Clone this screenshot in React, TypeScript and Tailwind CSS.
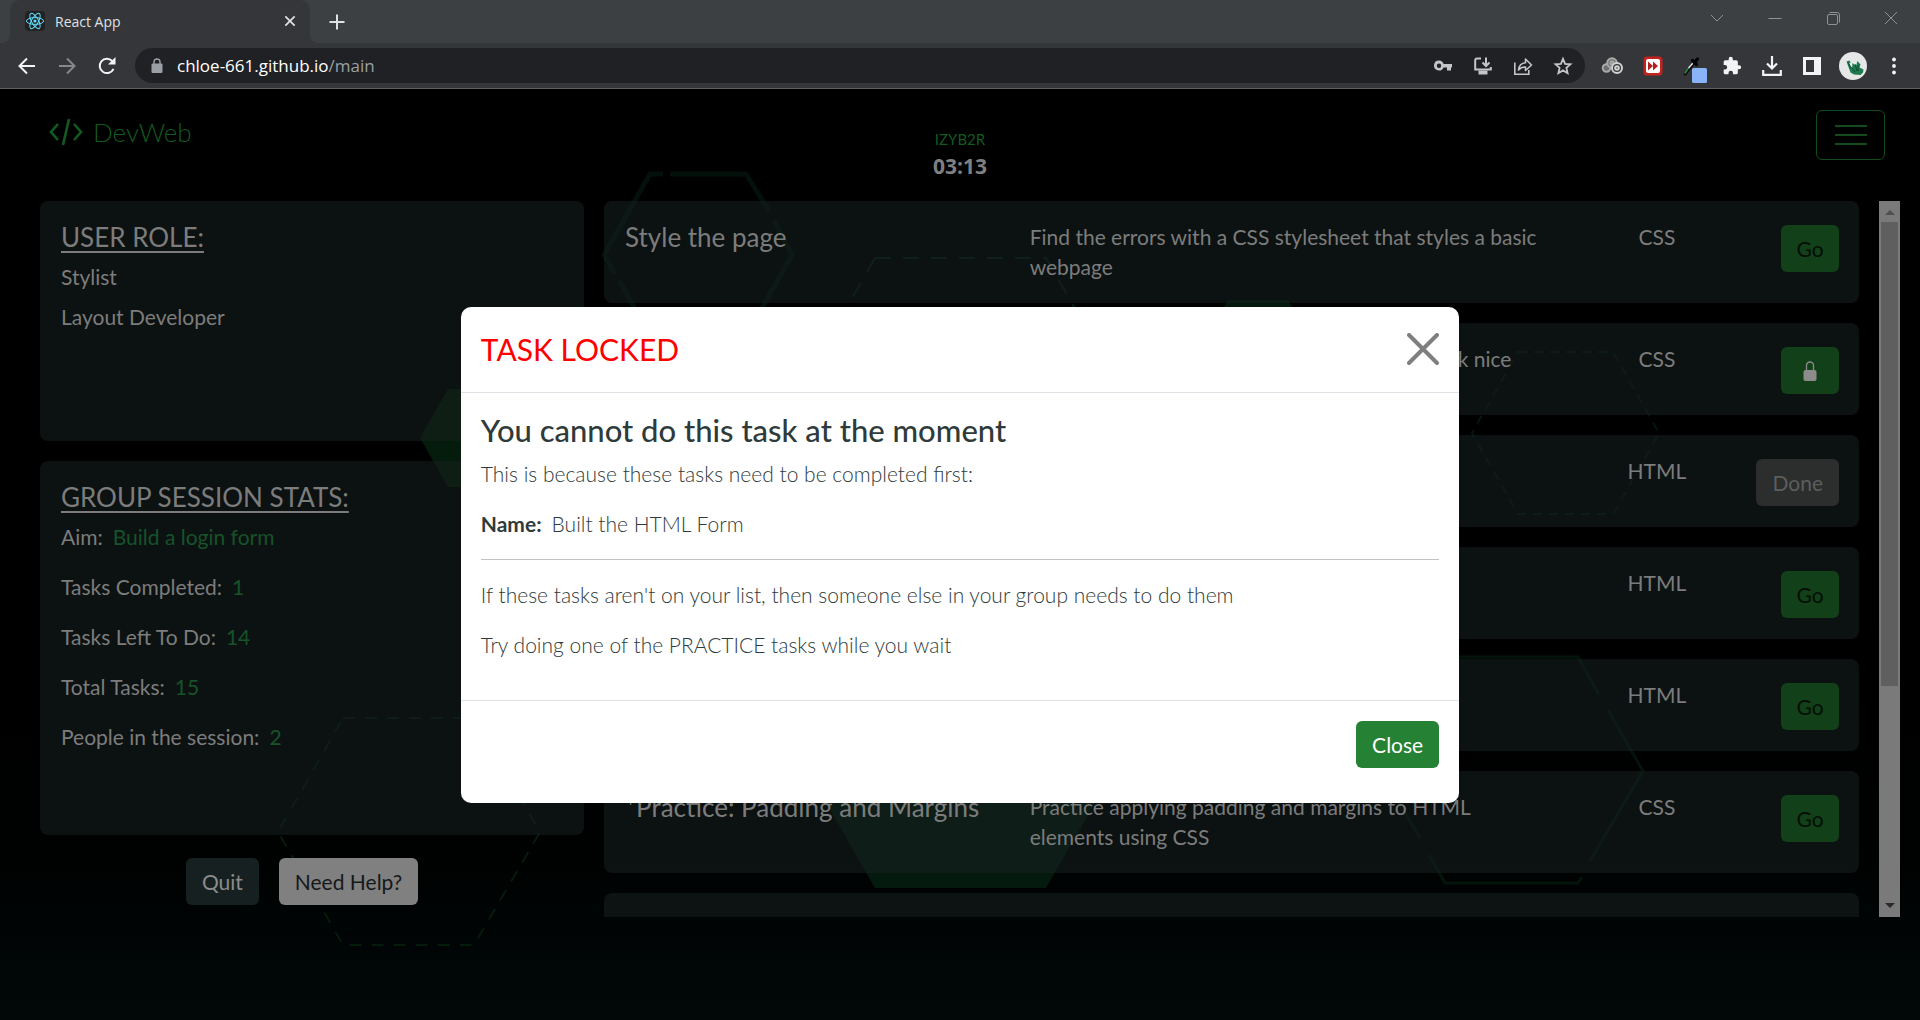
import React from "react";
import type { ReactNode } from "react";

type IconProps = { className?: string; children: ReactNode; box?: string };

function Icon({ className = "size-6", children, box = "0 0 24 24" }: IconProps) {
  return (
    <svg className={className} viewBox={box} fill="none" stroke="currentColor" strokeWidth="2" aria-hidden="true">
      {children}
    </svg>
  );
}

function ReactLogo() {
  return (
    <svg className="size-5 rounded-sm bg-[#222222]" viewBox="-10 -10 20 20" fill="none" stroke="#61dafb" strokeWidth="1" aria-hidden="true">
      <circle r="1.6" fill="#61dafb" stroke="none" />
      <ellipse rx="8.6" ry="3.4" />
      <ellipse rx="8.6" ry="3.4" transform="rotate(60)" />
      <ellipse rx="8.6" ry="3.4" transform="rotate(120)" />
    </svg>
  );
}

function TabStrip() {
  return (
    <div className="flex h-[43px] items-stretch bg-[#3c4043]">
      <div className="flex w-[10px] bg-[#35363a]">
        <span className="flex-1 rounded-br-lg bg-[#3c4043]" />
      </div>
      <div className="flex w-[300px] items-center rounded-t-[10px] bg-[#35363a] pl-[15px] pr-[12px] pb-px">
        <ReactLogo />
        <span className="ml-[10px] flex-1 text-[14px] text-[#dfe1e5]">React App</span>
        <button aria-label="Close tab" className="text-[#dfe1e5]">
          <Icon className="size-4">
            <path d="M5 5l14 14M19 5L5 19" strokeWidth="2.6" />
          </Icon>
        </button>
      </div>
      <div className="flex w-[10px] bg-[#35363a]">
        <span className="flex-1 rounded-bl-lg bg-[#3c4043]" />
      </div>
      <button aria-label="New tab" className="ml-[9px] text-[#dfe1e5]">
        <Icon className="size-4" box="0 0 16 16">
          <path d="M8 .5v15M.5 8h15" />
        </Icon>
      </button>
      <div className="ml-auto flex items-center gap-[42px] pb-[7px] pr-[21px] text-[#8f9294]">
        <button aria-label="Search tabs">
          <Icon className="size-4" box="0 0 16 16"><path d="M2 5l6 6 6-6" strokeWidth="1" /></Icon>
        </button>
        <button aria-label="Minimize">
          <Icon className="size-4" box="0 0 16 16"><path d="M1.500 8.500h13" strokeWidth="1" /></Icon>
        </button>
        <button aria-label="Restore">
          <Icon className="size-4" box="0 0 16 16">
            <rect x="2.500" y="4.500" width="10" height="10" rx="1.500" strokeWidth="1" />
            <path d="M4.500 2.500h7.500a2.500 2.500 0 0 1 2.500 2.500v7.500" strokeWidth="1" />
          </Icon>
        </button>
        <button aria-label="Close window">
          <Icon className="size-4" box="0 0 16 16"><path d="M2 2l12 12M14 2L2 14" strokeWidth="1" /></Icon>
        </button>
      </div>
    </div>
  );
}

function Toolbar() {
  return (
    <div className="flex h-[46px] items-center border-b border-[#5f6063] bg-[#35363a] pl-[17px] pr-4 text-[#f1f3f4]">
      <div className="flex gap-5">
        <button aria-label="Back">
          <Icon className="size-5" box="0 0 20 20"><path d="M18 10H3M10 2.500L2.500 10l7.500 7.500" /></Icon>
        </button>
        <button aria-label="Forward" className="text-[#85878a]">
          <Icon className="size-5" box="0 0 20 20"><path d="M2 10h15M10 2.500l7.500 7.500-7.500 7.500" /></Icon>
        </button>
        <button aria-label="Reload">
          <Icon className="size-5" box="0 0 20 20">
            <path d="M16.500 12.800A7.200 7.200 0 1 1 15.200 5" />
            <path d="M18.500 1v7.500H11z" fill="currentColor" stroke="none" />
          </Icon>
        </button>
      </div>
      <div className="ml-[18px] flex h-[35px] flex-1 items-center rounded-full bg-[#202124] pl-4 pr-[12px]">
        <svg className="h-4 w-3 text-[#9aa0a6]" viewBox="0 0 12 16" fill="currentColor" aria-hidden="true">
          <rect x="0.500" y="5.500" width="11" height="9.500" rx="1.200" />
          <path d="M3 6V4a3 3 0 0 1 6 0v2" fill="none" stroke="currentColor" strokeWidth="1.400" />
        </svg>
        <a href="#main" className="ml-[14px] flex-1 text-[17px] text-white">
          chloe-661.github.io<span className="text-[#9aa0a6]">/main</span>
        </a>
        <div className="flex items-center gap-5 text-[#c4c5c6]">
          <button aria-label="Passwords">
            <svg className="size-5" viewBox="0 0 20 20" fill="currentColor" aria-hidden="true">
              <path fillRule="evenodd" d="M6 4.500a5 5 0 1 0 4.600 7h3.400v3h4v-3h1v-3.500h-8.400A5 5 0 0 0 6 4.500zM6 7.500a2.200 2.200 0 1 1 0 4.400 2.200 2.200 0 0 1 0-4.400z" />
            </svg>
          </button>
          <button aria-label="Install app">
            <Icon className="size-5" box="0 0 20 20">
              <path d="M8 2.500H4A1.800 1.800 0 0 0 2.200 4v9.500h15.600V11" />
              <path d="M13 1.500v8M9.500 6.500L13 10l3.500-3.500" />
              <path d="M5.500 14.500h9v4h-9z" fill="currentColor" stroke="none" />
            </Icon>
          </button>
          <button aria-label="Share">
            <Icon className="size-5" box="0 0 20 20">
              <path d="M1.800 6.500v11.700h14V14" strokeWidth="1.600" />
              <path d="M5.500 14c.500-4.500 3-7 7-7.300V3l6 6-6 5.500V11c-3-.200-5 .700-7 3z" strokeWidth="1.600" strokeLinejoin="round" />
            </Icon>
          </button>
          <button aria-label="Bookmark this page">
            <Icon className="size-5" box="0 0 20 20">
              <path d="M10 2.800l2.100 5 5.400.500-4.100 3.600 1.200 5.300L10 14.400l-4.600 2.800 1.200-5.300L2.500 8.300l5.400-.500z" strokeWidth="1.800" />
            </Icon>
          </button>
        </div>
      </div>
      <div className="ml-4 flex items-center gap-5">
        <button aria-label="Cloud extension" className="text-[#a9a9a9]">
          <Icon className="size-[22px]" box="0 0 22 22">
            <circle cx="5.500" cy="13" r="3.800" fill="#6f7072" />
            <circle cx="11" cy="8" r="4.800" fill="#77787a" />
            <circle cx="11" cy="8" r="1.500" />
            <circle cx="16" cy="13" r="5" fill="#35363a" stroke="#d2d2d2" />
            <circle cx="16" cy="13" r="1.800" stroke="#d2d2d2" />
          </Icon>
        </button>
        <button aria-label="Speed extension">
          <svg className="size-5" viewBox="0 0 20 20" aria-hidden="true">
            <rect x="0.500" y="0.500" width="19" height="19" rx="3.500" fill="#c5221f" />
            <rect x="3" y="3" width="14" height="14" rx="2" fill="#fff" />
            <path d="M5 5.500l5 4.500-5 4.500zM10 5.500l5 4.500-5 4.500z" fill="#b3201d" />
          </svg>
        </button>
        <button aria-label="Colour picker" className="flex">
          <svg className="h-[36px] w-6" viewBox="0 0 24 36" aria-hidden="true">
            <path d="M2 26L10 16" stroke="#0a0a0a" strokeWidth="3" strokeLinecap="round" />
            <path d="M2 25L6 19.500" stroke="#2c8a48" strokeWidth="1.500" strokeLinecap="round" />
            <path d="M6 19.500L10 15" stroke="#dfe1e5" strokeWidth="1.500" strokeLinecap="round" />
            <path d="M9.500 12.500l4 4M12 14L14.500 11" stroke="#050505" strokeWidth="3.500" strokeLinecap="round" />
            <rect x="9" y="20" width="15" height="15" rx="1.500" fill="#8ab4f8" />
          </svg>
        </button>
        <button aria-label="Extensions" className="-ml-[5px]">
          <svg className="size-5" viewBox="0 0 24 24" fill="currentColor" aria-hidden="true">
            <path d="M20.500 11H19V7a2 2 0 0 0-2-2h-4V3.500a2.500 2.500 0 0 0-5 0V5H4a2 2 0 0 0-2 2v3.800h1.500a2.700 2.700 0 0 1 0 5.400H2V20a2 2 0 0 0 2 2h3.800v-1.500a2.700 2.700 0 0 1 5.400 0V22H17a2 2 0 0 0 2-2v-4h1.500a2.500 2.500 0 0 0 0-5z" />
          </svg>
        </button>
        <button aria-label="Downloads">
          <Icon className="size-5" box="0 0 20 20">
            <path d="M10 0v12M5 7.500l5 5 5-5" strokeWidth="2.200" />
            <path d="M1.200 14v4.800h17.600V14" strokeWidth="2.200" />
          </Icon>
        </button>
        <button aria-label="Side panel">
          <svg className="size-5" viewBox="0 0 20 20" aria-hidden="true">
            <path fill="currentColor" fillRule="evenodd" d="M1 1h18v18H1zM4 4v12h8V4z" />
          </svg>
        </button>
        <button aria-label="Profile" className="-ml-[3px]">
          <svg className="size-7" viewBox="0 0 28 28" aria-hidden="true">
            <circle cx="14" cy="14" r="14" fill="#e6e8e8" />
            <path d="M7.500 9.500l3-1 1.200 2-1.700.500 3 5.500.500-5.500 3.500 3 1.500-5 3 3.500-1 3 4 2-.500 3-2.500 2.500-6.500-.500-3.500-2z" fill="#1f7a4e" />
            <path d="M16 12l2 7M19 13v6M12 15l4 5M9.500 11l2 4.500" stroke="#0d4a33" strokeWidth="1" />
          </svg>
        </button>
        <button aria-label="Chrome menu" className="-ml-[3px]">
          <svg className="size-5" viewBox="0 0 20 20" fill="currentColor" aria-hidden="true">
            <circle cx="10" cy="3.500" r="1.900" />
            <circle cx="10" cy="10" r="1.900" />
            <circle cx="10" cy="16.500" r="1.900" />
          </svg>
        </button>
      </div>
    </div>
  );
}

/* Decorative hexagons behind the cards. */
function Backdrop() {
  return (
    <svg className="absolute inset-0 size-full" viewBox="0 89 1920 931" preserveAspectRatio="none" fill="none" aria-hidden="true">
      <path d="M663 174H650L604 255l11 19M619 280l31 56h96l46-81-18-35M769 211l-23-37h-76" stroke="#03110a" strokeWidth="5" />
      <path d="M875 258h171l85 148-85 148H875l-85-148z" stroke="#06200f" strokeWidth="2" strokeDasharray="16 12" />
      <path d="M1228 300h60l60 100h-180z" fill="#04190b" />
      <path d="M420 438l28-49h60v98h-60z" fill="#051b0b" />
      <path d="M343 718h131l66 114-66 113H343l-65-113z" stroke="#051c0d" strokeWidth="2" strokeDasharray="12 10" />
      <path d="M1518 352h95l46 81-46 81h-95l-46-81z" stroke="#05170d" strokeWidth="2" strokeDasharray="9 7" />
      <path d="M1440 657h138l21 38M1608 710l35 61-53 90M1582 877l-4 6h-133l-16-28M1420 838l-40-67" stroke="#04140b" strokeWidth="3" />
      <path d="M875 888l-85-148h341l-85 148z" fill="#051a0e" />
    </svg>
  );
}

const roundButton = "h-[47px] rounded-md px-4 text-[21px]";
const panel = "rounded-lg bg-[#15201f]/55";

type Task = {
  title: string;
  description: string;
  type: string;
  status: "go" | "locked" | "done" | "clipped";
};

const tasks: Task[] = [
  { title: "Style the page", description: "Find the errors with a CSS stylesheet that styles a basic webpage", type: "CSS", status: "go" },
  { title: "", description: "Style the login form using CSS to make this look nice", type: "CSS", status: "locked" },
  { title: "", description: "", type: "HTML", status: "done" },
  { title: "", description: "", type: "HTML", status: "go" },
  { title: "", description: "", type: "HTML", status: "go" },
  { title: "*Practice: Padding and Margins", description: "Practice applying padding and margins to HTML elements using CSS", type: "CSS", status: "go" },
  { title: "", description: "", type: "", status: "clipped" },
];

function TaskAction({ status }: { status: Task["status"] }) {
  if (status === "clipped") return null;
  if (status === "done") {
    return <button disabled className={`${roundButton} bg-[#2c2d2d] text-[#5c5e5e]`}>Done</button>;
  }
  if (status === "locked") {
    return (
      <button aria-label="Locked task" className={`${roundButton} flex w-[58px] items-center justify-center bg-[#124019] text-[#8c8c8c]`}>
        <svg className="h-5 w-[14px]" viewBox="0 0 14 20" aria-hidden="true">
          <rect x="0.500" y="9" width="13" height="11" rx="2" fill="currentColor" />
          <path d="M3.500 10V4.500a3.500 3.500 0 0 1 7 0V10" fill="none" stroke="currentColor" strokeWidth="1.300" />
        </svg>
      </button>
    );
  }
  return <button className={`${roundButton} w-[58px] !px-0 bg-[#124019] text-[#040d06]`}>Go</button>;
}

function TaskCard({ task }: { task: Task }) {
  return (
    <li className={`${panel} grid min-h-[92px] shrink-0 grid-cols-[minmax(0,20fr)_minmax(0,26fr)_minmax(0,10fr)_minmax(0,4fr)] pt-[21px] pr-5 pb-[21px] pl-[21px] leading-[30px]`}>
      <h2 className="text-[26px] whitespace-nowrap">{task.title}</h2>
      <p className="pr-4 text-[21px]">{task.description}</p>
      <p className="text-center text-[21px]">{task.type}</p>
      <div className="-mb-4 flex items-start justify-end pt-[3px]">
        <TaskAction status={task.status} />
      </div>
    </li>
  );
}

function Stat({ label, value }: { label: string; value: string }) {
  return (
    <div className="flex gap-[10px]">
      <dt>{label}</dt>
      <dd className="text-[#17522a]">{value}</dd>
    </div>
  );
}

function Sidebar() {
  return (
    <aside className="flex w-[544px] shrink-0 flex-col gap-5 text-[21px] leading-[30px]">
      <section className={`${panel} min-h-[240px] p-[21px]`}>
        <h2 className="text-[26px] underline decoration-2 underline-offset-4">USER ROLE:</h2>
        <p className="mt-[10px]">Stylist</p>
        <p className="mt-[10px]">Layout Developer</p>
      </section>
      <section className={`${panel} min-h-[374px] p-[21px]`}>
        <h2 className="text-[26px] underline decoration-2 underline-offset-4">GROUP SESSION STATS:</h2>
        <dl className="mt-[10px] flex flex-col gap-5">
          <Stat label="Aim:" value="Build a login form" />
          <Stat label="Tasks Completed:" value="1" />
          <Stat label="Tasks Left To Do:" value="14" />
          <Stat label="Total Tasks:" value="15" />
          <Stat label="People in the session:" value="2" />
        </dl>
      </section>
      <div className="mt-[3px] flex justify-center gap-5 pr-5">
        <button className={`${roundButton} bg-[#172020] text-[#8a8c8c]`}>Quit</button>
        <button className={`${roundButton} bg-[#808080] text-[#15191a]`}>Need Help?</button>
      </div>
    </aside>
  );
}

function Header() {
  return (
    <header className="relative grid h-28 grid-cols-3 items-start pr-[35px] pl-[49px] pt-[21px]">
      <a href="#home" className="mt-[6px] flex items-center gap-[10px] text-[26px] leading-[32px] font-light text-[#135a20]">
        <Icon className="h-7 w-[34px]" box="0 0 34 28">
          <path d="M9 6L2 14l7 8M25 6l7 8-7 8M20 1l-6 26" strokeWidth="2.600" />
        </Icon>
        DevWeb
      </a>
      <div className="flex flex-col items-center pr-[14px]">
        <span className="mt-[17px] text-[15px] leading-[24px] text-[#135a20]">IZYB2R</span>
        <span className="font-['Open_Sans'] text-[21px] leading-[30px] font-bold text-[#808080]">03:13</span>
      </div>
      <button aria-label="Menu" className="flex h-[50px] w-[69px] items-center justify-center justify-self-end rounded-md border border-[#124b1c] text-[#124b1c]">
        <Icon className="h-6 w-8" box="0 0 32 24">
          <path d="M0 3h32M0 12h32M0 21h32" />
        </Icon>
      </button>
    </header>
  );
}

function ScrollBar() {
  return (
    <div className="flex w-[21px] flex-col items-center bg-[#7a7a7a]" aria-hidden="true">
      <svg className="h-[21px] w-[10px] shrink-0" viewBox="0 0 10 21"><path d="M5 9l5 5H0z" fill="#4f4f4f" /></svg>
      <div className="w-[17px] flex-[464] bg-[#5f5f5f]" />
      <div className="flex-[210]" />
      <svg className="h-[21px] w-[10px] shrink-0" viewBox="0 0 10 21"><path d="M0 7h10l-5 5z" fill="#2b2b2b" /></svg>
    </div>
  );
}

function LockedDialog() {
  return (
    <div className="absolute inset-0 flex items-start justify-center pt-[218px]">
      <div role="dialog" aria-modal="true" aria-labelledby="locked-title" className="w-[52%] rounded-[10px] bg-white text-[21px] leading-[30px] font-light text-[#2f3b3b]">
        <div className="flex h-[86px] items-center justify-between border-b border-[#dee2e6] px-5 pb-[2px]">
          <h1 id="locked-title" className="text-[30px] font-normal text-[#ff0000]">TASK LOCKED</h1>
          <button aria-label="Close dialog" className="text-[#7f7f7f]">
            <Icon className="size-8" box="0 0 32 32">
              <path d="M2 2l28 28M30 2L2 30" strokeWidth="4" strokeLinecap="round" />
            </Icon>
          </button>
        </div>
        <div className="border-b border-[#dee2e6] px-5 pt-5 pb-10">
          <h2 className="text-[31px] leading-[34px] font-medium text-[#2f3b3b]">You cannot do this task at the moment</h2>
          <p className="mt-3">This is because these tasks need to be completed first:</p>
          <p className="mt-5"><b className="mr-[10px] font-bold">Name:</b>Built the HTML Form</p>
          <hr className="my-5 border-[#bfc3c3]" />
          <p>If these tasks aren't on your list, then someone else in your group needs to do them</p>
          <p className="mt-5">Try doing one of the PRACTICE tasks while you wait</p>
        </div>
        <div className="flex justify-end px-5 pt-5 pb-[35px]">
          <button className={`${roundButton} bg-[#258133] font-normal text-white`}>Close</button>
        </div>
      </div>
    </div>
  );
}

export default function App() {
  return (
    <div className="flex h-screen flex-col overflow-hidden bg-black font-['Open_Sans',sans-serif]">
      <TabStrip />
      <Toolbar />
      <div className="relative flex min-h-0 flex-1 flex-col bg-linear-to-b from-black from-50% to-[#010808] font-['Lato',sans-serif] text-[#7c7c7c]">
        <Backdrop />
        <Header />
        <main className="relative flex min-h-0 flex-1 gap-5 pr-5 pb-[103px] pl-10">
          <Sidebar />
          <ul className="flex min-w-0 flex-1 flex-col gap-5 overflow-hidden">
            {tasks.map((task, i) => (
              <TaskCard key={i} task={task} />
            ))}
          </ul>
          <ScrollBar />
        </main>
        <LockedDialog />
      </div>
    </div>
  );
}
